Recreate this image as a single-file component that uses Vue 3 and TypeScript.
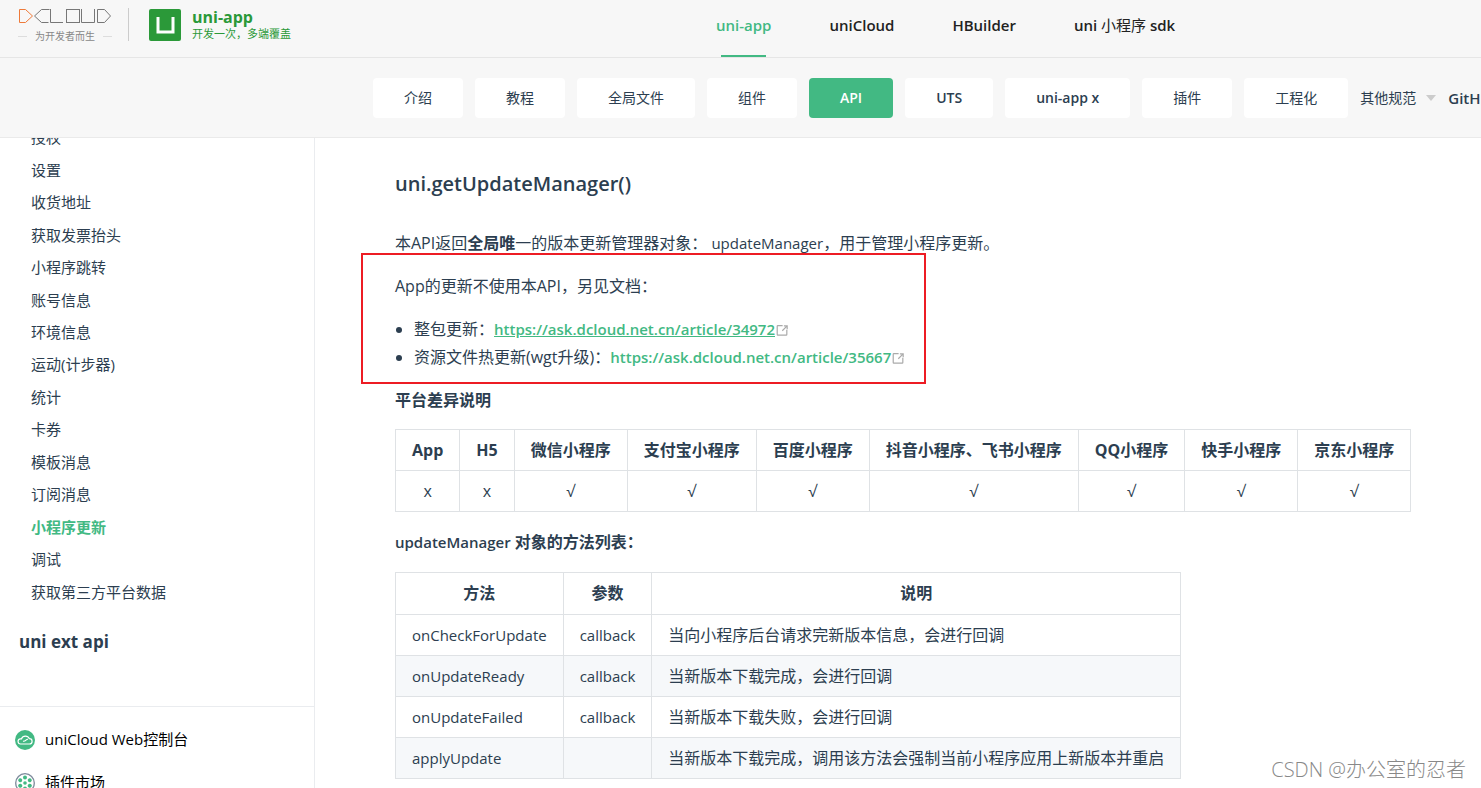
<script setup lang="ts">
interface NavLink { label: string; active?: boolean }

const products: NavLink[] = [
  { label: 'uni-app', active: true },
  { label: 'uniCloud' },
  { label: 'HBuilder' },
]
const sections: NavLink[] = [
  { label: '介绍' },
  { label: '教程' },
  { label: '全局文件' },
  { label: '组件' },
  { label: 'API', active: true },
  { label: 'UTS' },
  { label: 'uni-app x' },
  { label: '插件' },
  { label: '工程化' },
]
const topics: NavLink[] = [
  { label: '授权' },
  { label: '设置' },
  { label: '收货地址' },
  { label: '获取发票抬头' },
  { label: '小程序跳转' },
  { label: '账号信息' },
  { label: '环境信息' },
  { label: '运动(计步器)' },
  { label: '统计' },
  { label: '卡券' },
  { label: '模板消息' },
  { label: '订阅消息' },
  { label: '小程序更新', active: true },
  { label: '调试' },
  { label: '获取第三方平台数据' },
]
const articles = [
  { label: '整包更新：', url: 'https://ask.dcloud.net.cn/article/34972', hovered: true },
  { label: '资源文件热更新(wgt升级)：', url: 'https://ask.dcloud.net.cn/article/35667', hovered: false },
]
const platforms = [
  { name: 'App', mark: 'x' },
  { name: 'H5', mark: 'x' },
  { name: '微信小程序', mark: '√' },
  { name: '支付宝小程序', mark: '√' },
  { name: '百度小程序', mark: '√' },
  { name: '抖音小程序、飞书小程序', mark: '√' },
  { name: 'QQ小程序', mark: '√' },
  { name: '快手小程序', mark: '√' },
  { name: '京东小程序', mark: '√' },
]
const methods = [
  { name: 'onCheckForUpdate', param: 'callback', text: '当向小程序后台请求完新版本信息，会进行回调' },
  { name: 'onUpdateReady', param: 'callback', text: '当新版本下载完成，会进行回调' },
  { name: 'onUpdateFailed', param: 'callback', text: '当新版本下载失败，会进行回调' },
  { name: 'applyUpdate', param: '', text: '当新版本下载完成，调用该方法会强制当前小程序应用上新版本并重启' },
]
const spokes = [0, 60, 120, 180, 240, 300]
const isLatin = (label: string): boolean => /^[a-z]/i.test(label)
</script>

<template>
  <div class="page">
    <header class="header">
      <div class="topbar">
        <a class="dcloud" href="#" aria-label="DCloud">
          <svg width="94" height="16" viewBox="0 0 94 16" fill="none" stroke="#777" stroke-width="1">
            <polyline points="1.5,1.5 7.5,1.5 14.5,8 7.5,14.5 1.5,14.5 1.5,1.5" stroke="#ee7a3a" />
            <polyline points="31.5,1.5 23.5,1.5 16.5,8 23.5,14.5 30.5,14.5" />
            <polyline points="32.5,1 32.5,14.5 45,14.5" />
            <rect x="48.5" y="1.5" width="13" height="13" />
            <polyline points="63.5,1 63.5,14.5 76.500,14.5 76.500,1" />
            <polyline points="79.5,1.5 86.5,1.5 92.5,8 86.5,14.5 79.5,14.5 79.5,1.5" />
          </svg>
          <span class="slogan">为开发者而生</span>
        </a>
        <a class="brand" href="#">
          <svg width="32" height="32" viewBox="0 0 32 32">
            <rect width="32" height="32" rx="2" fill="#2b9939" />
            <path d="M9 8v15h15V8" fill="none" stroke="#fff" stroke-width="3" />
          </svg>
          <span class="brand-text">
            <strong>uni-app</strong>
            <span>开发一次，多端覆盖</span>
          </span>
        </a>
        <nav class="products">
          <a v-for="p in products" :key="p.label" href="#" :class="{ active: p.active }">{{ p.label }}</a>
          <a href="#"><span>uni <span class="regular">小程序</span> sdk</span></a>
        </nav>
      </div>
      <nav class="sections">
        <a v-for="s in sections" :key="s.label" class="tab" :class="{ active: s.active, latin: isLatin(s.label) }" href="#">{{ s.label }}</a>
        <button class="more" type="button">其他规范<span class="arrow"></span></button>
        <a class="github" href="#">GitHub</a>
      </nav>
    </header>

    <div class="body">
      <aside class="sidebar">
        <div class="scroller">
          <ul class="topics">
            <li v-for="t in topics" :key="t.label">
              <a href="#" :class="{ active: t.active }">{{ t.label }}</a>
            </li>
          </ul>
        </div>
        <p class="group">uni ext api</p>
        <div class="tools">
          <a href="#">
            <svg width="20" height="20" viewBox="0 0 20 20">
              <circle cx="10" cy="10" r="10" fill="#42b983" />
              <path d="M5.800 14a2.600 2.600 0 0 1-.3-5.200h1A4.200 4.200 0 0 1 14.300 8.600a2.700 2.700 0 0 1 .2 5.400zM8 11.200c2.800.6 3-2.400 5-1.900" fill="none" stroke="#fff" stroke-width="1.200" />
            </svg>
            uniCloud Web控制台
          </a>
          <a href="#">
            <svg width="20" height="20" viewBox="0 0 20 20">
              <circle cx="10" cy="10" r="9.300" fill="#fff" stroke="#7d8a9b" stroke-width="1.300" />
              <circle v-for="a in spokes" :key="a" cx="10" cy="4.500" r="2" fill="#42b983" :transform="`rotate(${a} 10 10)`" />
              <circle cx="10" cy="10" r="1.800" fill="#42b983" />
            </svg>
            插件市场
          </a>
        </div>
      </aside>

      <main class="content">
        <h3>uni.getUpdateManager()</h3>
        <p>本API返回<strong>全局唯</strong>一的版本更新管理器对象： <span class="code">updateManager</span>，用于管理小程序更新。</p>
        <div class="note">
          <p>App的更新不使用本API，另见文档：</p>
          <ul>
            <li v-for="a in articles" :key="a.url">
              {{ a.label }}<a :href="a.url" :class="{ hovered: a.hovered }">{{ a.url }}</a><svg class="out" width="15" height="15" viewBox="0 0 100 100" fill="#aaa">
                <path d="M18.800 85.100h56a8 8 0 0 0 8-8v-32h-8v32h-56v-56h32v-8h-32a8 8 0 0 0-8 8v56a8 8 0 0 0 8 8z" />
                <path d="M45.700 48.700l5.700 5.700 25.800-25.800v12.300h8v-26h-26v8h12.300z" />
              </svg>
            </li>
          </ul>
        </div>
        <p class="caption"><strong>平台差异说明</strong></p>
        <table class="platforms">
          <thead>
            <tr><th v-for="p in platforms" :key="p.name">{{ p.name }}</th></tr>
          </thead>
          <tbody>
            <tr><td v-for="p in platforms" :key="p.name">{{ p.mark }}</td></tr>
          </tbody>
        </table>
        <p><span class="code medium">updateManager</span> <strong>对象的方法列表：</strong></p>
        <table class="methods">
          <thead>
            <tr><th>方法</th><th>参数</th><th>说明</th></tr>
          </thead>
          <tbody>
            <tr v-for="m in methods" :key="m.name">
              <td class="code">{{ m.name }}</td><td class="code">{{ m.param }}</td><td>{{ m.text }}</td>
            </tr>
          </tbody>
        </table>
      </main>
    </div>
    <div class="watermark">CSDN @办公室的忍者</div>
  </div>
</template>

<style>
body { margin: 0; }
</style>

<style scoped>
.page {
  position: relative;
  display: flex;
  flex-direction: column;
  height: 100vh;
  overflow: hidden;
  background: #fff;
  color: #2c3e50;
  font: 16px/27px "Open Sans", "Noto Sans CJK SC", sans-serif;
}
a { color: inherit; text-decoration: none; }
.header { flex: none; background: #f7f7f7; border-bottom: 1px solid #eaeaea; white-space: nowrap; }
.topbar { display: flex; height: 57px; border-bottom: 1px solid #e6e6e6; }
.dcloud {
  box-sizing: border-box;
  display: flex;
  flex-direction: column;
  width: 111px;
  height: 33px;
  margin: 8px 0 0 18px;
  border-right: 1px solid #ccc;
}
.dcloud svg { flex: none; }
.slogan {
  display: flex;
  flex: none;
  align-items: center;
  gap: 8px;
  width: 94px;
  font-size: 10px;
  line-height: 24px;
  color: #888;
}
.slogan::before, .slogan::after { content: ""; flex: 1; height: 1px; background: #ddd; }
.brand { display: flex; gap: 11px; width: 567px; margin: 9px 0 0 20px; color: #2b9939; }
.brand-text { display: flex; flex-direction: column; font-size: 11px; line-height: 16px; }
.brand-text strong { font-size: 16px; }
.brand-text span { line-height: 18px; }
.products { display: flex; gap: 58px; font-size: 15px; font-weight: 600; line-height: 51px; color: #222; }
.products > a { display: flex; flex-direction: column; height: 57px; }
.products .active { color: #42b983; }
.products .active::after { content: ""; height: 2px; margin: 4px 5px 0; background: #42b983; }
.regular { font-weight: 400; }
.sections { display: flex; gap: 12px; height: 40px; padding: 20px 0 19px 373px; font-size: 14px; line-height: 40px; overflow: hidden; }
.tab { flex: none; padding: 0 31px; border-radius: 4px; background: #fff; }
.tab.latin { font-weight: 600; }
.tab.active { background: #42b983; color: #fff; }
.more { display: flex; flex: none; align-items: center; gap: 10px; padding: 0; border: 0; background: none; color: inherit; font: inherit; }
.arrow { border: 5px solid transparent; border-top: 6px solid #ccc; border-bottom: 0; }
.github { font-size: 15px; font-weight: 600; }
.body { display: flex; flex: 1; min-height: 0; }
.sidebar { display: flex; flex: none; flex-direction: column; width: 314px; border-right: 1px solid #eaecef; }
.scroller { flex: 1; min-height: 0; overflow: hidden; }
.topics {
  display: grid;
  grid-auto-rows: 1fr;
  align-items: center;
  height: calc(100% + 17px);
  margin: -17px 0 0;
  padding: 0 0 0 31px;
  list-style: none;
  font-size: 15px;
  line-height: 22px;
}
.topics .active { color: #42b983; font-weight: 600; }
.group { height: 66px; margin: 0; padding: 20px 0 12px 19px; font-size: 17px; font-weight: 700; }
.tools { flex: none; height: 82px; box-sizing: border-box; padding-top: 11px; border-top: 1px solid #eaecef; overflow: hidden; color: #000; font-size: 15px; }
.tools a { display: flex; align-items: center; gap: 10px; height: 43px; padding-left: 15px; }
.content { flex: 1; min-width: 0; padding: 30px 40px 0 80px; }
h3 { margin: 0 0 30px; font-size: 20px; font-weight: 600; line-height: 32px; }
p { margin: 0 0 16px; }
.note { position: relative; width: fit-content; }
.note::before { content: ""; position: absolute; inset: -20px -20px -13px -34px; border: 2px solid #ed1c24; pointer-events: none; }
.note ul { margin: 0 0 16px; padding-left: 19px; }
.note li + li { margin-top: 1px; }
.note a { color: #42b983; font-size: 15px; font-weight: 600; }
.note .hovered { text-decoration: underline; }
.out { vertical-align: middle; }
.code { font-size: 15px; }
.medium { font-weight: 600; }
.caption { margin-bottom: 15px; }
table { margin: 0 0 17px; border-collapse: collapse; line-height: 20px; }
th, td { padding: 10px 16px; border: 1px solid #dfe2e5; text-align: left; white-space: nowrap; }
th { text-align: center; }
.platforms td { text-align: center; }
.methods th { line-height: 21px; }
.methods tbody tr:nth-child(2n) { background: #f6f8fa; }
.watermark { position: absolute; right: 15px; bottom: 5px; color: #888; font-size: 20px; font-weight: 300; }
</style>
